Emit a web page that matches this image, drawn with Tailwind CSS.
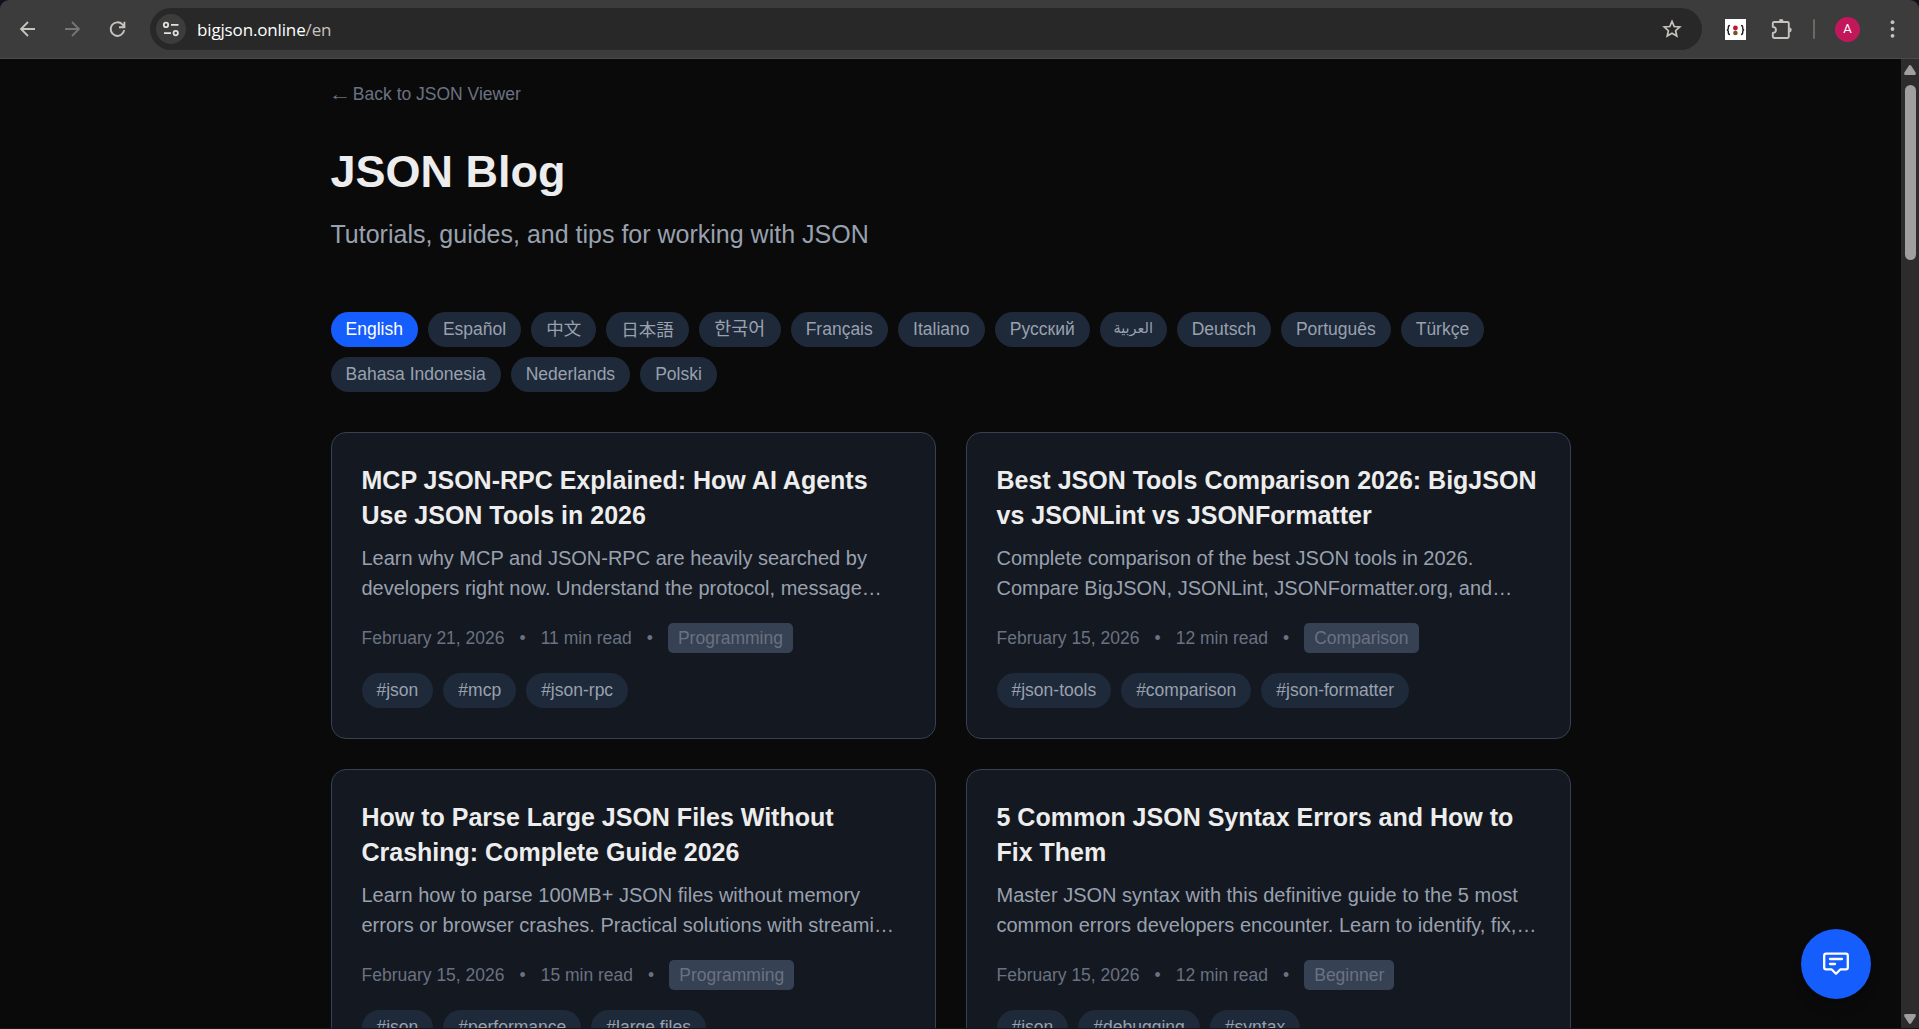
<!DOCTYPE html>
<html lang="en">
<head>
<meta charset="utf-8">
<title>JSON Blog</title>
<script src="https://cdn.jsdelivr.net/npm/@tailwindcss/browser@4"></script>
</head>
<body class="w-[1919px] h-[1029px] overflow-hidden bg-[#0a0a0a] text-[#ededed] font-['Liberation_Sans',Arial,'Noto_Sans_CJK_SC','DejaVu_Sans',sans-serif]">
<div class="flex h-[1029px] flex-col border-b border-[#1b1216]">

  <!-- Browser toolbar -->
  <div class="bg-[#150f1c]">
  <header class="flex h-[59px] shrink-0 items-start rounded-t-[9px] border-b border-[#4a4a4a] bg-[#3c3c3c]">
    <div class="flex h-[57px] w-[150px] items-center pl-[18px] text-[#c7c3be]">
      <svg class="size-5 shrink-0" viewBox="0 0 20 20" fill="none" stroke="currentColor" stroke-width="1.8"><path d="M17 10H3M10 3L3 10L10 17"/></svg>
      <svg class="ml-[24px] size-5 shrink-0 text-[#777573]" viewBox="0 0 20 20" fill="none" stroke="currentColor" stroke-width="1.8"><path d="M3 10H17M10 3L17 10L10 17"/></svg>
      <svg class="ml-[25px] size-5 shrink-0" viewBox="0 0 20 20" fill="none" stroke="currentColor" stroke-width="1.9"><path d="M17.2 11.2A6.8 6.8 0 1 1 15.4 5.4L17.4 7.8M17.4 2.8V8.2H12"/></svg>
    </div>
    <div class="mt-2 flex h-[42px] w-[1552px] items-center rounded-full bg-[#282828] pl-[6px] pr-[20px]">
      <div class="flex size-[30px] items-center justify-center rounded-full bg-[#3c3c3c]">
        <svg class="size-[18px]" viewBox="0 0 18 18" fill="none" stroke="#e3e0dc" stroke-width="1.8"><circle cx="4" cy="4.9" r="2.2"/><path d="M9 4.9H16.5M2 13.1H9"/><circle cx="13.7" cy="13.1" r="2.2"/></svg>
      </div>
      <div class="ml-[11px] grow pt-px font-['Open_Sans','Noto_Sans',sans-serif] text-[17px] leading-6 tracking-[-0.150px] text-white">bigjson.online<span class="text-[#c7c3be]">/en</span></div>
      <svg class="size-5" viewBox="0 0 20 20" fill="none" stroke="#c7c3be" stroke-width="1.7"><path d="M10 2.4L12.2 7.5L17.8 8L13.6 11.7L14.8 17.1L10 14.3L5.2 17.1L6.4 11.7L2.2 8L7.8 7.5Z"/></svg>
    </div>
    <div class="flex h-[58px] items-center pl-[23px]">
      <svg class="size-[21px]" viewBox="0 0 21 21" fill="none"><rect width="21" height="21" fill="#fff"/><path d="M5 6.5Q3.300 6.500 3.300 8V9.500Q3.300 11 1.800 11Q3.300 11 3.300 12.500V14Q3.300 15.500 5 15.500M16 6.500Q17.700 6.500 17.700 8V9.500Q17.700 11 19.200 11Q17.700 11 17.700 12.500V14Q17.700 15.500 16 15.500" stroke="#222" stroke-width="1.4"/><circle cx="10.4" cy="9" r="2.4" fill="#bd1830"/><circle cx="10.4" cy="14" r="2.3" fill="#76502b"/></svg>
      <svg class="ml-[23px] size-6" viewBox="0 0 24 24" fill="none" stroke="#c7c3be" stroke-width="1.9" stroke-linejoin="round"><path d="M5.2 5H18.5Q19.8 5 19.8 6.300V19.600Q19.800 21 18.500 21H5.200Q3.800 21 3.800 19.600V15.900C8 15.600 8 10.200 3.800 9.900V6.300Q3.800 5 5.200 5Z"/><path d="M9.800 4.500A2.400 2.400 0 0 1 14.600 4.500ZM20.300 10.600A2.400 2.400 0 0 1 20.300 15.400Z" fill="#c7c3be" stroke="none"/></svg>
      <div class="ml-[20px] h-5 w-[2px] rounded bg-[#6e6863]"></div>
      <div class="ml-[20px] flex size-[25px] items-center justify-center rounded-full bg-[#c2185b] font-[Roboto,sans-serif] text-[13px] text-white">A</div>
      <svg class="ml-[22px] size-5" viewBox="0 0 20 20" fill="#c7c3be"><circle cx="10.500" cy="3.200" r="1.900"/><circle cx="10.500" cy="10" r="1.900"/><circle cx="10.500" cy="16.800" r="1.900"/></svg>
    </div>
  </header>
  </div>

  <div class="relative flex min-h-0 grow">
    <main class="h-full w-[1901px] overflow-hidden">
      <div class="mx-auto w-[1280px] px-5 pt-[23px]">
        <a class="block text-[17.5px] leading-[25px] text-[#6a7282]"><span class="inline-block scale-x-[1.3]">←</span> Back to JSON Viewer</a>
        <h1 class="mt-10 text-[45px] leading-[50px] font-bold">JSON Blog</h1>
        <p class="mt-5 text-[25px] leading-[35px] text-[#99a1af]">Tutorials, guides, and tips for working with JSON</p>

        <nav class="mt-[60px] flex flex-wrap gap-[10px] text-[17.5px] leading-[25px] text-[#99a1af]">
          <span class="h-[35px] rounded-full bg-[#155dfc] px-[15px] py-[5px] text-white">English</span>
          <span class="h-[35px] rounded-full bg-[#1e2939] px-[15px] py-[5px]">Español</span>
          <span class="h-[35px] rounded-full bg-[#1e2939] px-[15px] py-[5px]">中文</span>
          <span class="h-[35px] rounded-full bg-[#1e2939] px-[15px] py-[4px] font-['Noto_Sans_CJK_JP',sans-serif]">日本語</span>
          <span class="h-[35px] w-[82px] rounded-full bg-[#1e2939] py-[3px] text-center font-['Noto_Sans_CJK_KR',sans-serif] text-[18.500px]">한국어</span>
          <span class="h-[35px] rounded-full bg-[#1e2939] px-[15px] py-[5px]">Français</span>
          <span class="h-[35px] w-[87px] rounded-full bg-[#1e2939] py-[5px] text-center">Italiano</span>
          <span class="h-[35px] rounded-full bg-[#1e2939] px-[15px] py-[5px]">Русский</span>
          <span class="h-[35px] w-[67px] rounded-full bg-[#1e2939] py-[4px] text-center text-[14.500px]">العربية</span>
          <span class="h-[35px] rounded-full bg-[#1e2939] px-[15px] py-[5px]">Deutsch</span>
          <span class="h-[35px] rounded-full bg-[#1e2939] px-[15px] py-[5px]">Português</span>
          <span class="h-[35px] rounded-full bg-[#1e2939] px-[15px] py-[5px]">Türkçe</span>
          <span class="h-[35px] rounded-full bg-[#1e2939] px-[15px] py-[5px]">Bahasa Indonesia</span>
          <span class="h-[35px] rounded-full bg-[#1e2939] px-[15px] py-[5px]">Nederlands</span>
          <span class="h-[35px] rounded-full bg-[#1e2939] px-[15px] py-[5px]">Polski</span>
        </nav>

        <div class="mt-10 grid grid-cols-2 gap-[30px]">
          <article class="h-[307px] rounded-[15px] border border-[#364153] bg-[#141820] p-[30px]">
            <h2 class="text-[25px] leading-[35px] font-bold">MCP JSON-RPC Explained: How AI Agents<br>Use JSON Tools in 2026</h2>
            <p class="mt-[10px] whitespace-nowrap text-[20px] leading-[30px] text-[#99a1af]">Learn why MCP and JSON-RPC are heavily searched by<br>developers right now. Understand the protocol, message…</p>
            <div class="mt-5 flex items-center gap-[15px] text-[17.5px] leading-[25px] text-[#6a7282]">
              <span>February 21, 2026</span><span>•</span><span>11 min read</span><span>•</span><span class="rounded-[5px] bg-[#364153] px-[10px] py-[2.5px]">Programming</span>
            </div>
            <div class="mt-5 flex gap-[10px] text-[17.5px] leading-[25px] text-[#99a1af]">
              <span class="rounded-full bg-[#1e2939] px-[15px] py-[5px]">#json</span><span class="rounded-full bg-[#1e2939] px-[15px] py-[5px]">#mcp</span><span class="rounded-full bg-[#1e2939] px-[15px] py-[5px]">#json-rpc</span>
            </div>
          </article>
          <article class="h-[307px] rounded-[15px] border border-[#364153] bg-[#141820] p-[30px]">
            <h2 class="whitespace-nowrap text-[25px] leading-[35px] font-bold">Best JSON Tools Comparison 2026: BigJSON<br>vs JSONLint vs JSONFormatter</h2>
            <p class="mt-[10px] whitespace-nowrap text-[20px] leading-[30px] text-[#99a1af]">Complete comparison of the best JSON tools in 2026.<br>Compare BigJSON, JSONLint, JSONFormatter.org, and…</p>
            <div class="mt-5 flex items-center gap-[15px] text-[17.5px] leading-[25px] text-[#6a7282]">
              <span>February 15, 2026</span><span>•</span><span>12 min read</span><span>•</span><span class="rounded-[5px] bg-[#364153] px-[10px] py-[2.5px]">Comparison</span>
            </div>
            <div class="mt-5 flex gap-[10px] text-[17.5px] leading-[25px] text-[#99a1af]">
              <span class="rounded-full bg-[#1e2939] px-[15px] py-[5px]">#json-tools</span><span class="rounded-full bg-[#1e2939] px-[15px] py-[5px]">#comparison</span><span class="rounded-full bg-[#1e2939] px-[15px] py-[5px]">#json-formatter</span>
            </div>
          </article>
          <article class="h-[307px] rounded-[15px] border border-[#364153] bg-[#141820] p-[30px]">
            <h2 class="text-[25px] leading-[35px] font-bold">How to Parse Large JSON Files Without<br>Crashing: Complete Guide 2026</h2>
            <p class="mt-[10px] whitespace-nowrap text-[20px] leading-[30px] text-[#99a1af]">Learn how to parse 100MB+ JSON files without memory<br>errors or browser crashes. Practical solutions with streami…</p>
            <div class="mt-5 flex items-center gap-[15px] text-[17.5px] leading-[25px] text-[#6a7282]">
              <span>February 15, 2026</span><span>•</span><span>15 min read</span><span>•</span><span class="rounded-[5px] bg-[#364153] px-[10px] py-[2.5px]">Programming</span>
            </div>
            <div class="mt-5 flex gap-[10px] text-[17.5px] leading-[25px] text-[#99a1af]">
              <span class="rounded-full bg-[#1e2939] px-[15px] py-[5px]">#json</span><span class="rounded-full bg-[#1e2939] px-[15px] py-[5px]">#performance</span><span class="rounded-full bg-[#1e2939] px-[15px] py-[5px]">#large files</span>
            </div>
          </article>
          <article class="h-[307px] rounded-[15px] border border-[#364153] bg-[#141820] p-[30px]">
            <h2 class="text-[25px] leading-[35px] font-bold">5 Common JSON Syntax Errors and How to<br>Fix Them</h2>
            <p class="mt-[10px] whitespace-nowrap text-[20px] leading-[30px] text-[#99a1af]">Master JSON syntax with this definitive guide to the 5 most<br>common errors developers encounter. Learn to identify, fix,…</p>
            <div class="mt-5 flex items-center gap-[15px] text-[17.5px] leading-[25px] text-[#6a7282]">
              <span>February 15, 2026</span><span>•</span><span>12 min read</span><span>•</span><span class="rounded-[5px] bg-[#364153] px-[10px] py-[2.5px]">Beginner</span>
            </div>
            <div class="mt-5 flex gap-[10px] text-[17.5px] leading-[25px] text-[#99a1af]">
              <span class="rounded-full bg-[#1e2939] px-[15px] py-[5px]">#json</span><span class="rounded-full bg-[#1e2939] px-[15px] py-[5px]">#debugging</span><span class="rounded-full bg-[#1e2939] px-[15px] py-[5px]">#syntax</span>
            </div>
          </article>
        </div>
      </div>
    </main>

    <!-- Scrollbar -->
    <div class="flex h-full w-[18px] flex-col items-center bg-[#2c2c2c] pt-[6px] pb-[4px]">
      <svg class="h-[10px] w-3" viewBox="0 0 12 10" fill="#9f9f9f"><path d="M4.800 0.700Q6 -0.500 7.200 0.700L11.600 7.500Q12.400 10 10.500 10H1.500Q-0.400 10 0.400 7.500Z"/></svg>
      <div class="mt-[10px] h-[175px] w-[11px] rounded-full bg-[#9f9f9f]"></div>
      <svg class="mt-auto h-[10px] w-3" viewBox="0 0 12 10" fill="#9f9f9f"><path d="M4.800 9.300Q6 10.500 7.200 9.300L11.600 2.500Q12.400 0 10.500 0H1.500Q-0.400 0 0.400 2.500Z"/></svg>
    </div>

    <!-- Floating feedback button -->
    <button class="absolute right-12 bottom-[29px] flex size-[70px] items-center justify-center rounded-full bg-[#155dfc] shadow-lg">
      <svg class="size-[30px]" viewBox="0 0 30 30" fill="none" stroke="#fff" stroke-width="2.300" stroke-linecap="round" stroke-linejoin="round"><path d="M5 4.700H25Q26.800 4.700 26.800 6.500V18.500Q26.800 20.300 25 20.300H19.500L15 24.800L10.500 20.300H5Q3.200 20.300 3.200 18.500V6.500Q3.200 4.700 5 4.700ZM9 10H21M9 15H14"/></svg>
    </button>
  </div>
</div>
</body>
</html>
